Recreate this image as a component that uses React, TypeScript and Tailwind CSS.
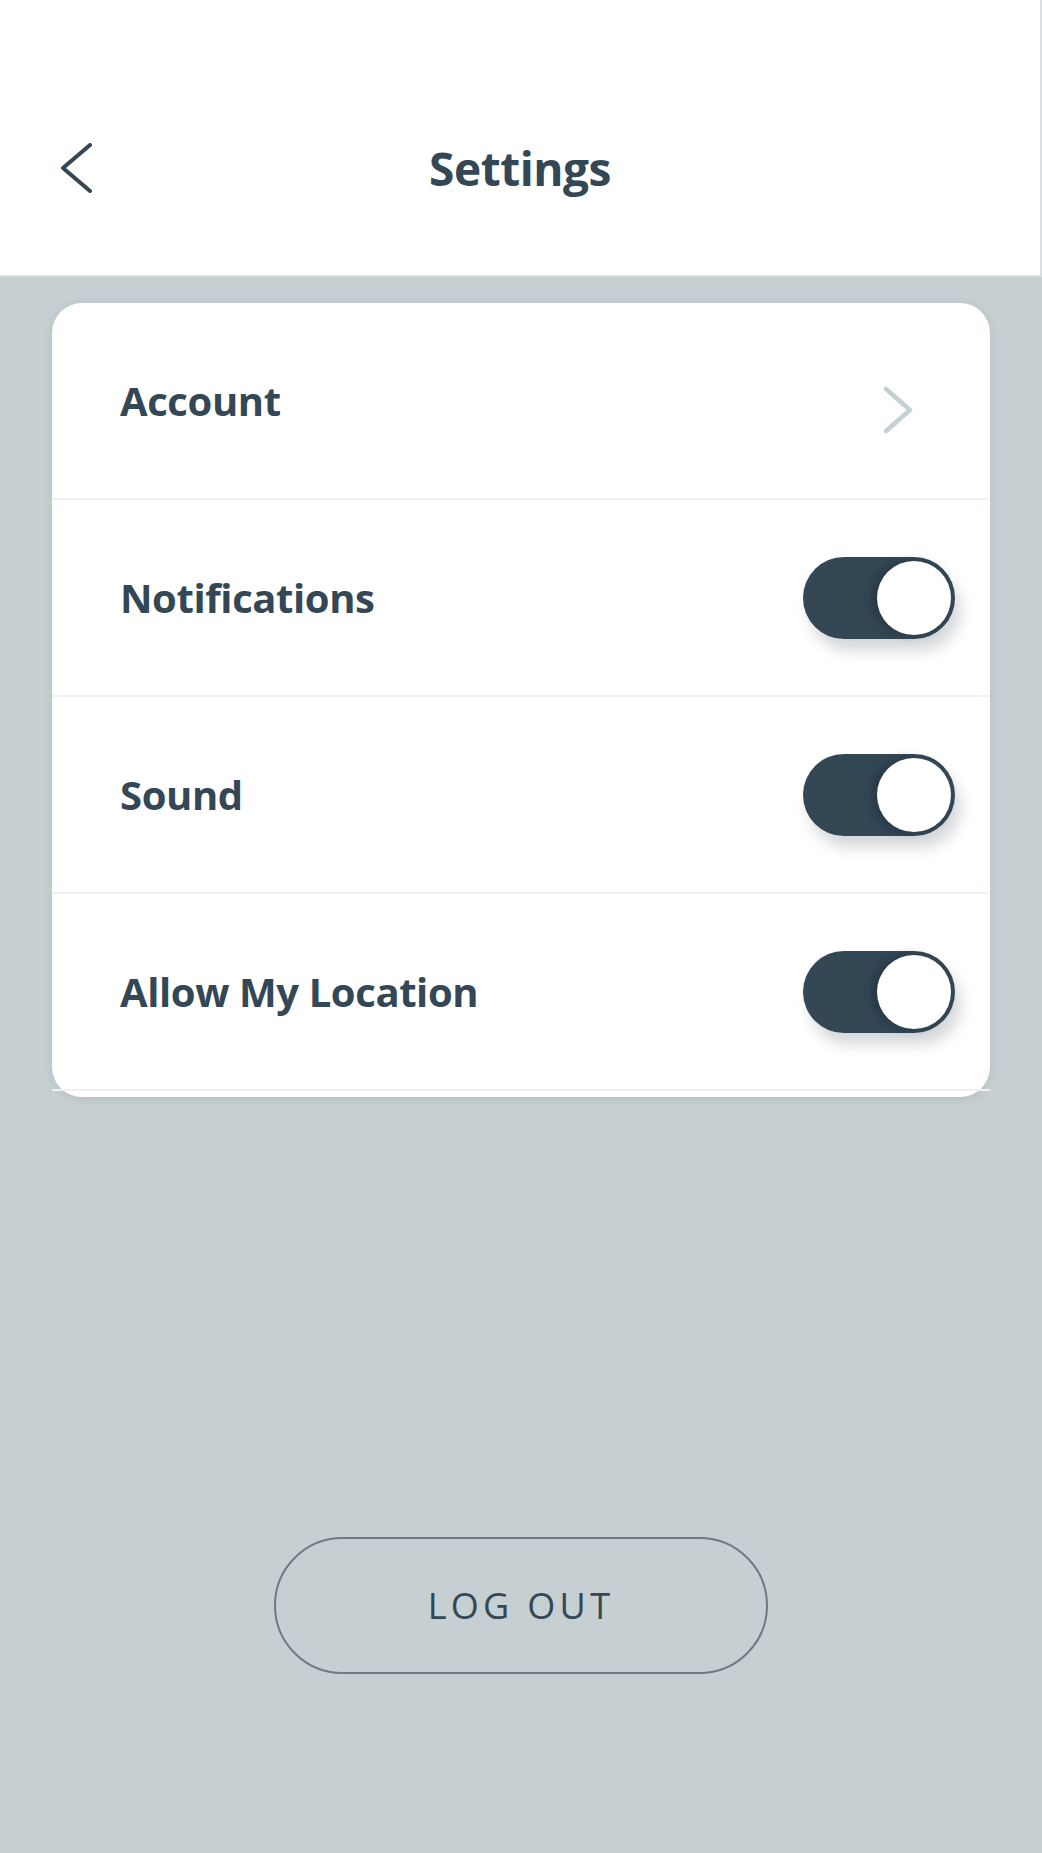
import { useState } from "react";

const rows = [
  { label: "Account", kind: "link" },
  { label: "Notifications", kind: "toggle" },
  { label: "Sound", kind: "toggle" },
  { label: "Allow My Location", kind: "toggle" },
];

function Toggle({ on, onClick }: { on: boolean; onClick: () => void }) {
  return (
    <button
      onClick={onClick}
      className={`relative h-[82px] w-[152px] rounded-full shadow-[6px_12px_14px_rgba(30,45,55,0.18)] ${
        on ? "bg-[#334755]" : "bg-[#c5cfd2]"
      }`}
    >
      <span
        className={`absolute top-[4px] h-[74px] w-[74px] rounded-full bg-white shadow-[-6px_0_10px_rgba(20,30,40,0.35)] ${
          on ? "right-[4px]" : "left-[4px]"
        }`}
      />
    </button>
  );
}

export default function App() {
  const [toggles, setToggles] = useState([true, true, true]);

  return (
    <div className="flex min-h-screen flex-col bg-[#c6cfd2] font-['Open_Sans',sans-serif] text-[#334755]">
      {/* Header */}
      <header className="h-[277px] border-r-2 border-b-2 border-[#d9dfe1] bg-white">
        <div className="grid grid-cols-[1fr_auto_1fr] items-center pt-[143px]">
          <div className="pl-[60px]">
            <svg width="34" height="50" viewBox="0 0 34 50" fill="none">
              <path
                d="M30 2 L3 25 L30 48"
                stroke="#334755"
                strokeWidth="4"
                strokeLinecap="round"
                strokeLinejoin="round"
              />
            </svg>
          </div>
          <h1 className="text-[46px] leading-none font-bold tracking-[-0.01em]">Settings</h1>
          <div />
        </div>
      </header>

      <main className="flex flex-col px-[52px] pt-[26px]">
        {/* Settings card */}
        <div className="rounded-[30px] bg-white pb-[6px] shadow-[0_2px_10px_rgba(40,60,70,0.10)]">
          {rows.map((row, i) => (
            <div
              key={row.label}
              className="flex h-[197px] items-center justify-between border-b-2 border-[#eef0f1] pl-[68px] pr-[35px]"
            >
              <span className="text-[40px] font-bold tracking-[-0.01em]">{row.label}</span>
              {row.kind === "link" ? (
                <svg width="34" height="48" viewBox="0 0 34 48" fill="none" className="mt-[18px] mr-[40px]">
                  <path
                    d="M5 3 L29 24 L5 45"
                    stroke="#c5d0d3"
                    strokeWidth="4.5"
                    strokeLinecap="round"
                    strokeLinejoin="round"
                  />
                </svg>
              ) : (
                <Toggle
                  on={toggles[i - 1]}
                  onClick={() =>
                    setToggles((t) => t.map((v, j) => (j === i - 1 ? !v : v)))
                  }
                />
              )}
            </div>
          ))}
        </div>

        <button className="mx-auto mt-[440px] flex h-[137px] w-[494px] items-center justify-center rounded-full border-2 border-[#6d7c82] text-[36px] tracking-[0.12em] text-[#334755]">
          LOG OUT
        </button>
      </main>
    </div>
  );
}
